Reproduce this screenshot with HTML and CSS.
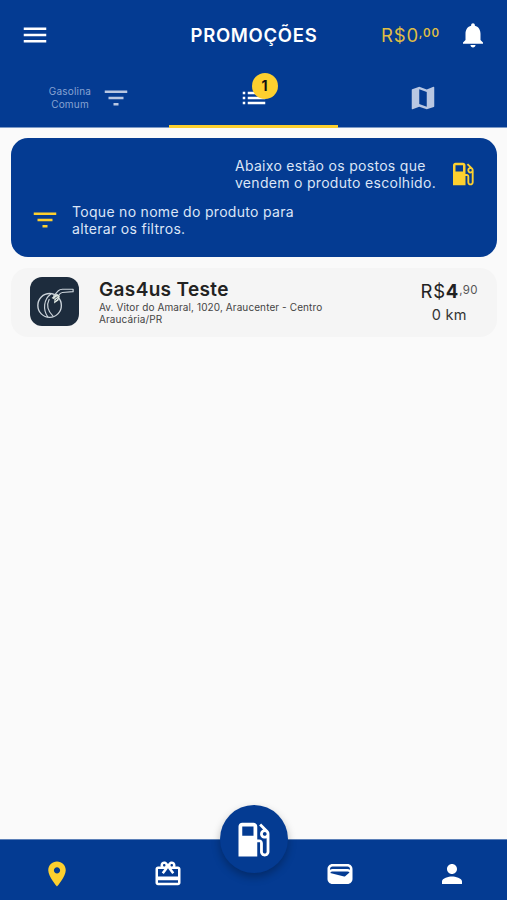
FILE: index.html
```html
<!DOCTYPE html>
<html lang="pt-BR">
<head>
<meta charset="utf-8">
<title>Promoções</title>
<link rel="stylesheet" href="styles.css">
</head>
<body>
<svg class="defs" aria-hidden="true">
<symbol id="filter" viewBox="0 0 24 24"><path d="M10 18h4v-2h-4v2zM3 6v2h18V6H3zm3 7h12v-2H6v2z"/></symbol>
<symbol id="pump" viewBox="0 0 24 24"><path d="M19.77 7.23l.01-.01-3.72-3.72L15 4.56l2.11 2.11c-.94.36-1.61 1.26-1.61 2.33 0 1.38 1.12 2.5 2.5 2.5.36 0 .69-.08 1-.21v7.21c0 .55-.45 1-1 1s-1-.45-1-1V14c0-1.1-.9-2-2-2h-1V5c0-1.1-.9-2-2-2H6c-1.1 0-2 .9-2 2v16h10v-7.500h1.500v5c0 1.380 1.120 2.500 2.500 2.500s2.500-1.120 2.500-2.500V9c0-.69-.28-1.320-.73-1.770zM12 10H6V5h6v5zm6 0c-.55 0-1-.45-1-1s.45-1 1-1 1 .45 1 1-.45 1-1 1z"/></symbol>
</svg>
<header class="header">
  <div class="bar">
    <svg class="icon" viewBox="0 0 24 24"><path d="M3 18h18v-2H3v2zm0-5h18v-2H3v2zm0-7v2h18V6H3z"/></svg>
    <h1 class="title">PROMOÇÕES</h1>
    <div class="balance"><span>R$0</span><span class="cents">,00</span></div>
    <svg class="icon" viewBox="0 0 24 24"><path d="M12 22c1.100 0 2-.9 2-2h-4c0 1.100.890 2 2 2zm6-6v-5c0-3.070-1.640-5.640-4.500-6.320V4c0-.83-.67-1.500-1.500-1.500s-1.500.67-1.500 1.500v.68C7.630 5.360 6 7.920 6 11v5l-2 2v1h16v-1l-2-2z"/></svg>
  </div>
  <nav class="tabs">
    <div class="tab product"><span class="fuel">Gasolina<br>Comum</span><svg class="icon"><use href="#filter"/></svg></div>
    <div class="tab active"><div class="badged"><svg class="icon" viewBox="0 0 24 24"><path d="M3 13h2v-2H3v2zm0 4h2v-2H3v2zm0-8h2V7H3v2zm4 4h14v-2H7v2zm0 4h14v-2H7v2zM7 7v2h14V7H7z"/></svg><span class="badge">1</span></div></div>
    <div class="tab"><svg class="icon" viewBox="0 0 24 24"><path d="M20.500 3l-.16.030L15 5.100 9 3 3.360 4.900c-.21.070-.36.250-.36.480V20.500c0 .28.220.5.500.5l.16-.03L9 18.900l6 2.100 5.640-1.900c.21-.07.360-.25.360-.48V3.500c0-.28-.22-.5-.5-.5zM15 19l-6-2.110V5l6 2.110V19z"/></svg></div>
  </nav>
</header>
<main class="content">
  <section class="help">
    <div class="tip tip-end"><p>Abaixo estão os postos que<br>vendem o produto escolhido.</p><svg class="icon"><use href="#pump"/></svg></div>
    <div class="tip"><svg class="icon"><use href="#filter"/></svg><p>Toque no nome do produto para<br>alterar os filtros.</p></div>
  </section>
  <article class="station">
    <svg class="logo" viewBox="0 0 50 50"><g fill="none" stroke="#cbd3da" stroke-width="1.200" stroke-linecap="round" stroke-linejoin="round"><ellipse cx="20" cy="29" rx="12" ry="12.200" stroke-width="1.400"/><path d="M21 17.500c-7 5-8 16-3 23M19.500 23c-3 6-1 12 4 17"/><path d="M24 19.500l5-5.500c1-1 2-1.500 4-1.500h11v2.500l-11 .8c-2 .2-3 1.700-4 3.200"/></g><path d="M22 21.500l5.500-4.500 3 2.500-1.500 4.500-4.500 3 .5-4z" fill="#dce5df"/><path d="M25 22l3-2M26 24l2-2" stroke="#1d2c3d" stroke-width=".8"/></svg>
    <div class="info"><h2 class="name">Gas4us Teste</h2><p class="address">Av. Vitor do Amaral, 1020, Araucenter - Centro<br>Araucária/PR</p></div>
    <div class="offer"><div class="price"><span>R$</span><b>4</b><span class="price-cents">,90</span></div><div class="distance">0 km</div></div>
  </article>
</main>
<footer class="bottom">
  <svg class="icon selected" viewBox="0 0 24 24"><path d="M12 2C8.130 2 5 5.130 5 9c0 5.250 7 13 7 13s7-7.750 7-13c0-3.870-3.130-7-7-7zm0 9.500c-1.380 0-2.500-1.120-2.500-2.500s1.120-2.500 2.500-2.500 2.500 1.120 2.500 2.500-1.120 2.500-2.500 2.500z"/></svg>
  <svg class="icon" viewBox="0 0 24 24"><path d="M20 6h-2.180c.11-.31.180-.65.180-1 0-1.660-1.340-3-3-3-1.050 0-1.960.54-2.500 1.350l-.5.670-.5-.68C10.960 2.540 10.050 2 9 2 7.340 2 6 3.340 6 5c0 .35.070.69.180 1H4c-1.110 0-1.990.89-1.990 2L2 19c0 1.110.89 2 2 2h16c1.110 0 2-.89 2-2V8c0-1.110-.89-2-2-2zm-5-2c.55 0 1 .45 1 1s-.45 1-1 1-1-.45-1-1 .45-1 1-1zM9 4c.55 0 1 .45 1 1s-.45 1-1 1-1-.45-1-1 .45-1 1-1zm11 15H4v-2h16v2zm0-5H4V8h5.080L7 10.830 8.620 12 11 8.760l1-1.360 1 1.360L15.380 12 17 10.830 14.920 8H20v6z"/></svg>
  <div class="fab"><svg class="icon fab-icon"><use href="#pump"/></svg></div>
  <svg class="icon" viewBox="0 0 24 24"><path d="M18 4H6C3.790 4 2 5.790 2 8v8c0 2.210 1.790 4 4 4h12c2.210 0 4-1.790 4-4V8c0-2.210-1.790-4-4-4zm-1.860 9.770c-.24.2-.57.280-.88.2L4.150 11.250C4.450 10.520 5.160 10 6 10h12c.67 0 1.260.34 1.630.84l-3.490 2.930zM6 6h12c1.100 0 2 .9 2 2v.55c-.59-.34-1.270-.55-2-.55H6c-.73 0-1.410.21-2 .55V8c0-1.100.9-2 2-2z"/></svg>
  <svg class="icon" viewBox="0 0 24 24"><path d="M12 12c2.210 0 4-1.790 4-4s-1.790-4-4-4-4 1.790-4 4 1.790 4 4 4zm0 2c-2.670 0-8 1.340-8 4v2h16v-2c0-2.660-5.330-4-8-4z"/></svg>
</footer>
</body>
</html>
```
FILE: styles.css
```css
* { box-sizing: border-box; }
body {
  margin: 0;
  height: 900px;
  display: flex;
  flex-direction: column;
  overflow: hidden;
  background: #fafafa;
  color: #222;
  font-family: Inter, "Liberation Sans", sans-serif;
}
h1, h2, p { margin: 0; }
.defs { display: none; }
.icon { display: block; width: 30px; height: 30px; flex: none; fill: currentColor; }
.header { height: 128px; background: #043b92; color: #fff; border-bottom: 1px solid #7d9ac6; }
.bar {
  height: 70px;
  display: grid;
  grid-template-columns: 30px 1fr 60px 30px;
  align-items: center;
  padding: 0 19px 0 20px;
}
.title { font-size: 18.5px; line-height: 24px; font-weight: 600; letter-spacing: 0.7px; padding-left: 140.5px; }
.balance { display: flex; align-items: flex-start; color: #dfbd45; font-size: 18.5px; line-height: 24px; letter-spacing: 0.8px; white-space: nowrap; margin-left: -17px; }
.cents { font-size: 11.5px; line-height: 21px; font-weight: 600; letter-spacing: 0.8px; }
.tabs { height: 58px; display: grid; grid-template-columns: repeat(3, 1fr); }
.tab { display: flex; align-items: center; justify-content: center; padding-bottom: 3px; color: #b9c7e2; }
.active { color: #fff; border-bottom: 3px solid #fdd02f; padding-bottom: 0; }
.product { gap: 10px; padding-left: 11px; }
.fuel { font-size: 10px; line-height: 12.5px; letter-spacing: 0.2px; text-align: center; color: #87a3d2; }
.badged { position: relative; }
.badge {
  position: absolute;
  left: 13px;
  top: -10px;
  width: 26px;
  height: 26px;
  border-radius: 50%;
  background: #fdd02f;
  color: #111;
  font-size: 14px;
  font-weight: 700;
  line-height: 26px;
  text-align: center;
}
.content { flex: 1; padding: 10px 10px 0 11px; }
.help {
  height: 119px;
  border-radius: 17px;
  background: #043b92;
  color: #dbe5f7;
  padding: 19px 19px 0;
  font-size: 14px;
  line-height: 17px;
  letter-spacing: 0.3px;
}
.tip { display: flex; align-items: center; gap: 12px; }
.tip + .tip { margin-top: 12px; }
.tip-end { justify-content: flex-end; }
.tip .icon { color: #fdd02f; }
.station {
  display: flex;
  height: 69px;
  margin-top: 11px;
  padding: 9px 19px 0;
  border-radius: 17px;
  background: #f5f5f5;
}
.logo { width: 49px; height: 49px; border-radius: 12px; background: #1d2c3d; }
.info { margin-left: 20px; flex: 1; }
.name { font-size: 19px; line-height: 25px; font-weight: 600; letter-spacing: 0.35px; }
.address { font-size: 10px; line-height: 12px; letter-spacing: 0.1px; color: #444; margin-top: -1px; }
.offer { text-align: center; }
.price { display: flex; font-size: 18.5px; line-height: 28px; letter-spacing: 0.8px; }
.price b { font-weight: 700; }
.price-cents { font-size: 11.5px; line-height: 26px; letter-spacing: 0.4px; color: #555; }
.distance { font-size: 14.5px; line-height: 20px; letter-spacing: 0.3px; color: #333; }
.bottom {
  height: 61px;
  display: grid;
  grid-template-columns: 113px 110px 61px 112px 111px;
  align-items: center;
  justify-items: center;
  padding-top: 8px;
  background: #043b92;
  color: #fff;
  border-top: 1px solid #5c80b8;
}
.selected { color: #fdd02f; }
.fab {
  width: 68px;
  height: 68px;
  margin-top: -70px;
  display: flex;
  align-items: center;
  justify-content: center;
  border-radius: 50%;
  background: #043b92;
  box-shadow: 0 4px 8px rgba(0, 0, 0, 0.28);
}
.fab-icon { width: 45px; height: 45px; }
```
